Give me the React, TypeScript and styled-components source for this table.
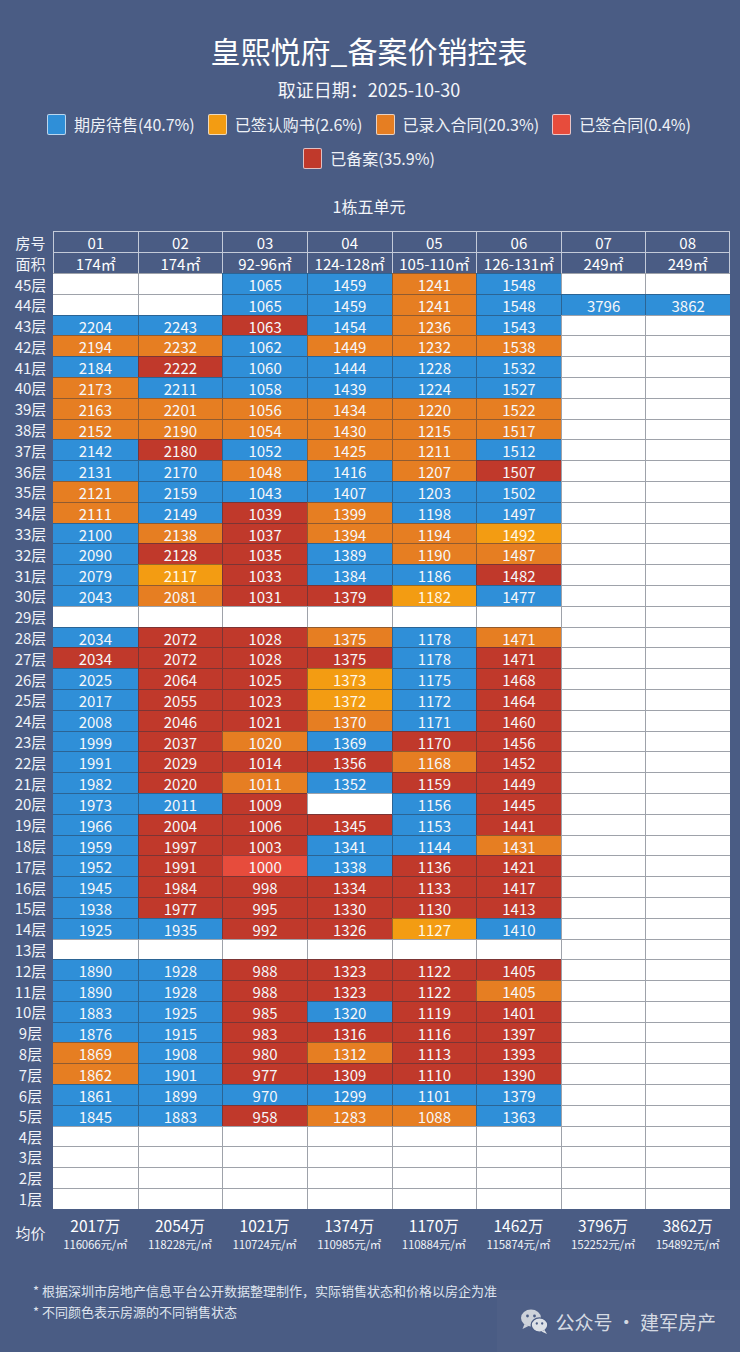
import React from 'react';
import { styled, createGlobalStyle } from 'styled-components';

const PAGE_BG = '#4a5c84';

const GlobalStyle = createGlobalStyle`
  body {
    margin: 0;
    background: ${PAGE_BG};
    font-family: "Noto Sans CJK SC", "Noto Sans", sans-serif;
    color: #f4f6fa;
  }
`;

type Status = 'B' | 'G' | 'O' | 'X' | 'R' | 'W';

const statusColor: Record<Status, string> = {
  B: '#2f8fd8',
  G: '#f39c12',
  O: '#e67e22',
  X: '#e74c3c',
  R: '#c0392b',
  W: '#ffffff',
};

const legend: { status: Status; label: string }[] = [
  { status: 'B', label: '期房待售(40.7%)' },
  { status: 'G', label: '已签认购书(2.6%)' },
  { status: 'O', label: '已录入合同(20.3%)' },
  { status: 'X', label: '已签合同(0.4%)' },
  { status: 'R', label: '已备案(35.9%)' },
];

const units = [
  { no: '01', area: '174㎡', total: '2017万', unit: '116066元/㎡' },
  { no: '02', area: '174㎡', total: '2054万', unit: '118228元/㎡' },
  { no: '03', area: '92-96㎡', total: '1021万', unit: '110724元/㎡' },
  { no: '04', area: '124-128㎡', total: '1374万', unit: '110985元/㎡' },
  { no: '05', area: '105-110㎡', total: '1170万', unit: '110884元/㎡' },
  { no: '06', area: '126-131㎡', total: '1462万', unit: '115874元/㎡' },
  { no: '07', area: '249㎡', total: '3796万', unit: '152252元/㎡' },
  { no: '08', area: '249㎡', total: '3862万', unit: '154892元/㎡' },
];

// floor -> units 01..06 (07/08 are empty except on 44)
const floorData: Record<number, string> = {
  45: 'W W B1065 B1459 O1241 B1548',
  44: 'W W B1065 B1459 O1241 B1548 B3796 B3862',
  43: 'B2204 B2243 R1063 B1454 O1236 B1543',
  42: 'O2194 O2232 B1062 O1449 O1232 O1538',
  41: 'B2184 R2222 B1060 B1444 B1228 B1532',
  40: 'O2173 B2211 B1058 B1439 B1224 B1527',
  39: 'O2163 O2201 O1056 O1434 O1220 O1522',
  38: 'O2152 O2190 O1054 O1430 O1215 O1517',
  37: 'B2142 R2180 B1052 O1425 O1211 B1512',
  36: 'B2131 B2170 O1048 B1416 O1207 R1507',
  35: 'O2121 B2159 B1043 B1407 B1203 B1502',
  34: 'O2111 B2149 R1039 O1399 B1198 B1497',
  33: 'B2100 O2138 R1037 O1394 O1194 G1492',
  32: 'B2090 R2128 R1035 B1389 O1190 O1487',
  31: 'B2079 G2117 R1033 B1384 B1186 R1482',
  30: 'B2043 O2081 R1031 R1379 G1182 B1477',
  28: 'B2034 R2072 R1028 O1375 B1178 O1471',
  27: 'R2034 R2072 R1028 R1375 B1178 R1471',
  26: 'B2025 R2064 R1025 G1373 B1175 R1468',
  25: 'B2017 R2055 R1023 G1372 B1172 R1464',
  24: 'B2008 R2046 R1021 O1370 B1171 R1460',
  23: 'B1999 R2037 O1020 B1369 R1170 R1456',
  22: 'B1991 R2029 R1014 R1356 O1168 R1452',
  21: 'B1982 R2020 O1011 B1352 R1159 R1449',
  20: 'B1973 B2011 R1009 W B1156 R1445',
  19: 'B1966 R2004 R1006 R1345 B1153 R1441',
  18: 'B1959 R1997 R1003 B1341 B1144 O1431',
  17: 'B1952 R1991 X1000 B1338 R1136 R1421',
  16: 'B1945 R1984 R998 R1334 R1133 R1417',
  15: 'B1938 R1977 R995 R1330 R1130 R1413',
  14: 'B1925 B1935 R992 R1326 G1127 B1410',
  12: 'B1890 B1928 R988 R1323 R1122 R1405',
  11: 'B1890 B1928 R988 R1323 R1122 O1405',
  10: 'B1883 B1925 R985 B1320 R1119 R1401',
  9: 'B1876 B1915 R983 R1316 R1116 R1397',
  8: 'O1869 B1908 R980 O1312 R1113 R1393',
  7: 'O1862 B1901 R977 R1309 R1110 R1390',
  6: 'B1861 B1899 B970 B1299 B1101 B1379',
  5: 'B1845 B1883 R958 O1283 O1088 B1363',
};

function cellsFor(floor: number) {
  const tokens = (floorData[floor] || '').split(' ').filter(Boolean);
  return Array.from({ length: 8 }, (_, i) => {
    const t = tokens[i] || 'W';
    return { status: t[0] as Status, value: t.slice(1) };
  });
}

const floors = Array.from({ length: 45 }, (_, i) => 45 - i);

const Page = styled.div`
  padding: 32px 10px 0 8px;
  min-height: 1352px;
  box-sizing: border-box;
  position: relative;
`;

const Title = styled.h1`
  margin: 0;
  text-align: center;
  font-size: 30px;
  line-height: 36px;
  font-weight: 400;
  color: #ffffff;
`;

const Subtitle = styled.div`
  margin-top: 9px;
  text-align: center;
  font-size: 18px;
  line-height: 24px;
`;

const Legend = styled.div`
  margin: 13px auto 0;
  max-width: 660px;
  display: flex;
  flex-wrap: wrap;
  justify-content: center;
  column-gap: 13px;
  row-gap: 13px;
`;

const LegendItem = styled.div`
  display: flex;
  align-items: center;
  gap: 8px;
  height: 21px;
  font-size: 16px;
  line-height: 21px;
  color: #eef1f6;
`;

const Swatch = styled.span<{ $status: Status }>`
  width: 17px;
  height: 19px;
  border-radius: 2px;
  background: ${(p) => statusColor[p.$status]};
  border: 1px solid rgba(235, 238, 245, 0.75);
`;

const SectionTitle = styled.div`
  margin-top: 26px;
  text-align: center;
  font-size: 16px;
  line-height: 22px;
`;

const Table = styled.div`
  margin-top: 14px;
  display: flex;
  flex-direction: column;
`;

const Row = styled.div<{ $h: number }>`
  display: grid;
  grid-template-columns: 45px repeat(8, 1fr);
  height: ${(p) => p.$h}px;
`;

const RowLabel = styled.div`
  display: flex;
  align-items: center;
  justify-content: center;
  font-size: 15px;
  color: #f0f2f7;
  white-space: nowrap;
`;

const HeadCell = styled.div<{ $bottom?: boolean }>`
  display: flex;
  align-items: center;
  justify-content: center;
  font-size: 15px;
  color: #ffffff;
  border-top: 1px solid #c3cad8;
  border-left: 1px solid #c3cad8;
  border-bottom: ${(p) => (p.$bottom ? '1px solid #c3cad8' : 'none')};
  white-space: nowrap;
  &:last-child {
    border-right: 1px solid #c3cad8;
  }
`;

const DataCell = styled.div<{ $status: Status }>`
  display: flex;
  align-items: center;
  justify-content: center;
  font-size: 15px;
  background: ${(p) => statusColor[p.$status]};
  color: ${(p) => (p.$status === 'G' ? '#fff8e6' : '#f6f7fa')};
  border-top: 1px solid rgba(40, 48, 66, 0.45);
  border-left: 1px solid rgba(40, 48, 66, 0.45);
  &:nth-child(2) {
    border-left: none;
  }
`;

const AvgRow = styled.div`
  display: grid;
  grid-template-columns: 45px repeat(8, 1fr);
  margin-top: 5px;
`;

const AvgCell = styled.div`
  display: flex;
  flex-direction: column;
  align-items: center;
  white-space: nowrap;
`;

const AvgTotal = styled.div`
  font-size: 15.5px;
  line-height: normal;
  color: #ffffff;
`;

const AvgUnit = styled.div`
  font-size: 11.5px;
  line-height: normal;
  color: #eef1f6;
  letter-spacing: -0.2px;
`;

const Notes = styled.div`
  margin-top: 31px;
  padding-left: 25px;
  display: flex;
  flex-direction: column;
  gap: 5px;
  font-size: 13px;
  line-height: 16px;
  color: #dfe4ee;
`;

const Watermark = styled.div`
  position: absolute;
  right: 0;
  bottom: 0;
  width: 243px;
  height: 62px;
  box-sizing: border-box;
  padding: 0 24px 0 20px;
  display: flex;
  align-items: center;
  justify-content: flex-end;
  gap: 6px;
  background: rgba(255, 255, 255, 0.022);
  font-size: 19px;
  color: rgba(232, 235, 241, 0.9);
  white-space: nowrap;
`;

function WeChatIcon() {
  return (
    <svg width="29" height="27" viewBox="0 0 29 27">
      <ellipse cx="11" cy="10" rx="10" ry="8.5" fill="#cdd2da" />
      <path d="M4.5 16 L2.5 21 L8.5 18 Z" fill="#cdd2da" />
      <circle cx="7.5" cy="8" r="1.4" fill={PAGE_BG} />
      <circle cx="14.5" cy="8" r="1.4" fill={PAGE_BG} />
      <ellipse cx="19.5" cy="17" rx="8.3" ry="7.2" fill="#dde1e7" stroke={PAGE_BG} strokeWidth="1.3" />
      <path d="M24.5 22 L27 26 L21.5 23.5 Z" fill="#dde1e7" />
      <circle cx="16.8" cy="15.5" r="1.15" fill={PAGE_BG} />
      <circle cx="22.2" cy="15.5" r="1.15" fill={PAGE_BG} />
    </svg>
  );
}

export default function App() {
  return (
    <>
      <GlobalStyle />
      <Page>
        <Title>皇熙悦府_备案价销控表</Title>
        <Subtitle>取证日期：2025-10-30</Subtitle>

        <Legend>
          {legend.map((item) => (
            <LegendItem key={item.label}>
              <Swatch $status={item.status} />
              {item.label}
            </LegendItem>
          ))}
        </Legend>

        <SectionTitle>1栋五单元</SectionTitle>

        <Table>
          <Row $h={21}>
            <RowLabel>房号</RowLabel>
            {units.map((u) => (
              <HeadCell key={u.no}>{u.no}</HeadCell>
            ))}
          </Row>
          <Row $h={21}>
            <RowLabel>面积</RowLabel>
            {units.map((u) => (
              <HeadCell key={u.no} $bottom>
                {u.area}
              </HeadCell>
            ))}
          </Row>

          {floors.map((floor) => (
            <Row key={floor} $h={20.8}>
              <RowLabel>{floor}层</RowLabel>
              {cellsFor(floor).map((c, i) => (
                <DataCell key={i} $status={c.status}>
                  {c.value}
                </DataCell>
              ))}
            </Row>
          ))}

          <AvgRow>
            <RowLabel>均价</RowLabel>
            {units.map((u) => (
              <AvgCell key={u.no}>
                <AvgTotal>{u.total}</AvgTotal>
                <AvgUnit>{u.unit}</AvgUnit>
              </AvgCell>
            ))}
          </AvgRow>
        </Table>

        <Notes>
          <div>* 根据深圳市房地产信息平台公开数据整理制作，实际销售状态和价格以房企为准</div>
          <div>* 不同颜色表示房源的不同销售状态</div>
        </Notes>

        <Watermark>
          <WeChatIcon />
          公众号 · 建军房产
        </Watermark>
      </Page>
    </>
  );
}
